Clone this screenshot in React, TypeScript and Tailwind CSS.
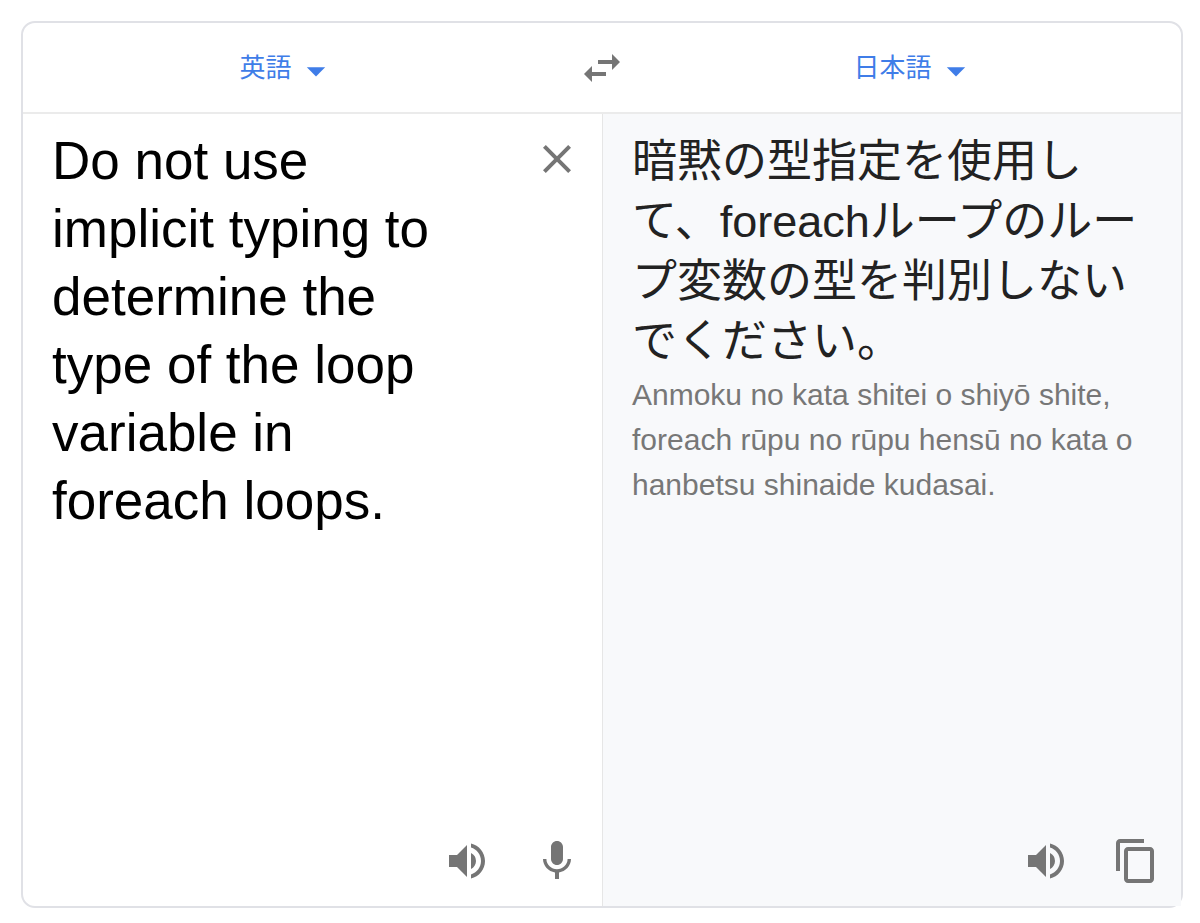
import { useState } from 'react';
import {
  MdArrowDropDown,
  MdClose,
  MdContentCopy,
  MdMic,
  MdSwapHoriz,
  MdVolumeUp,
} from 'react-icons/md';

const languages = ['英語', '日本語', '中国語'];

const translation = {
  text: '暗黙の型指定を使用して、foreachループのループ変数の型を判別しないでください。',
  reading: 'Anmoku no kata shitei o shiyō shite, foreach rūpu no rūpu hensū no kata o hanbetsu shinaide kudasai.',
};

type LanguageSelectProps = {
  label: string;
  value: string;
  onChange: (value: string) => void;
};

const LanguageSelect = ({ label, value, onChange }: LanguageSelectProps) => (
  <label className="flex items-center gap-0.5 text-[#3f7de8]">
    <select
      aria-label={label}
      value={value}
      onChange={(e) => onChange(e.target.value)}
      className="field-sizing-content cursor-pointer appearance-none bg-transparent text-[26px] leading-9 outline-none"
    >
      {languages.map((name) => (
        <option key={name} value={name}>{name}</option>
      ))}
    </select>
    <MdArrowDropDown size={44} className="mt-1.5" />
  </label>
);

const App = () => {
  const [from, setFrom] = useState('英語');
  const [to, setTo] = useState('日本語');
  const [source, setSource] = useState(
    'Do not use implicit typing to determine the type of the loop variable in foreach loops.'
  );

  const swap = () => {
    setFrom(to);
    setTo(from);
  };

  return (
    <div
      lang="ja"
      className="flex min-h-screen bg-white pt-[21px] pr-[17px] pb-[15px] pl-[21px] font-['Liberation_Sans','Noto_Sans_CJK_JP',sans-serif]"
    >
      <main className="flex flex-1 flex-col rounded-[14px] border-2 border-[#e0e1e6]">
        <header className="flex h-[91px] items-center border-b-2 border-[#ebebeb]">
          <div className="flex flex-1 justify-center pr-6">
            <LanguageSelect label="翻訳元の言語" value={from} onChange={setFrom} />
          </div>
          <button type="button" aria-label="言語を入れ替える" onClick={swap} className="text-[#757575]">
            <MdSwapHoriz size={48} />
          </button>
          <div className="flex flex-1 justify-center pl-6">
            <LanguageSelect label="翻訳先の言語" value={to} onChange={setTo} />
          </div>
        </header>

        <div className="grid flex-1 grid-cols-2">
          <section className="flex flex-col justify-between">
            <div className="flex items-start gap-[81px] pr-[21px] pl-[29px]">
              <textarea
                aria-label="原文"
                rows={6}
                value={source}
                onChange={(e) => setSource(e.target.value)}
                className="mt-[13px] min-w-0 flex-1 resize-none overflow-hidden text-[53px] leading-[68px] text-black outline-none"
              />
              <button
                type="button"
                aria-label="原文を消去"
                onClick={() => setSource('')}
                className="mt-[21px] text-[#757575]"
              >
                <MdClose size={48} />
              </button>
            </div>
            <div className="flex justify-end gap-[42px] p-[21px] text-[#757575]">
              <button type="button" aria-label="原文を聞く"><MdVolumeUp size={48} /></button>
              <button type="button" aria-label="音声入力"><MdMic size={48} /></button>
            </div>
          </section>

          <section className="flex flex-col justify-between border-l border-[#e6e6e6] bg-[#f8f9fb]">
            <div className="px-[29px] pt-[18px]">
              <p className="text-[45px] leading-[60px] text-[#222222]">{translation.text}</p>
              <p className="text-[30px] leading-[45px] text-[#777777]">{translation.reading}</p>
            </div>
            <div className="flex justify-end gap-[42px] p-[21px] text-[#757575]">
              <button type="button" aria-label="翻訳を聞く"><MdVolumeUp size={48} /></button>
              <button type="button" aria-label="翻訳をコピー"><MdContentCopy size={48} /></button>
            </div>
          </section>
        </div>
      </main>
    </div>
  );
};

export default App;
